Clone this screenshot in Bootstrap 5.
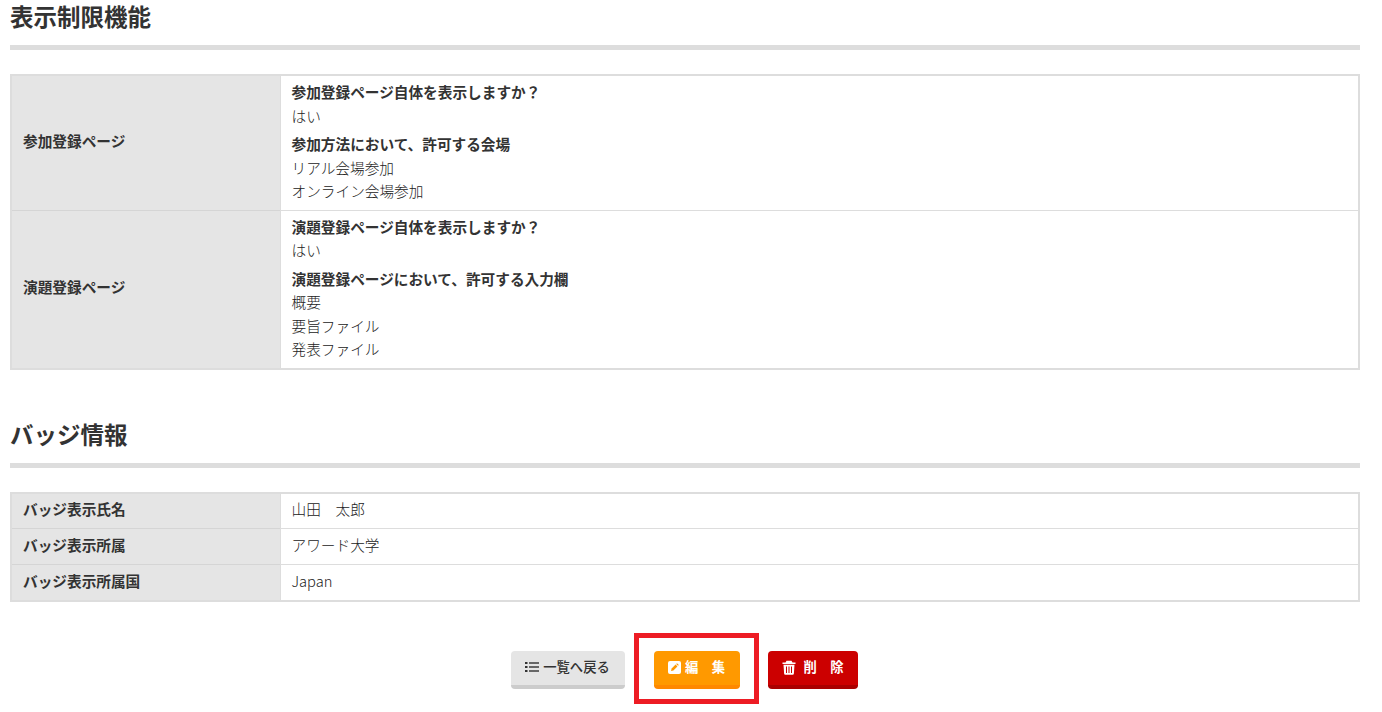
<!DOCTYPE html>
<html lang="ja">
<head>
<meta charset="utf-8">
<title>表示制限機能</title>
<link href="https://cdn.jsdelivr.net/npm/bootstrap@5.3.0/dist/css/bootstrap.min.css" rel="stylesheet">
<style>
body{font-family:"Noto Sans CJK JP","Noto Sans",sans-serif;color:#333;font-size:14.67px;line-height:23.5px;background:#fff}
.page-wrap{padding:0 22px 18px 10px}
.sec-title{font-size:23.5px;line-height:32px;font-weight:700;margin:0;padding-bottom:13px;border-bottom:5px solid #ddd;color:#333}
.sec-gap{margin-top:48px}
.info-table{width:100%;margin:24px 0 0;border-collapse:collapse;border:2px solid #ddd;table-layout:fixed}
.info-table th{width:269px;background:#e5e5e5;font-weight:700;padding:0 11px 4px;vertical-align:middle;border-top:1px solid #d5d5d5}
.info-table td{padding:4px 11px 7px;background:#fff;vertical-align:middle;border-top:1px solid #ddd;border-left:1px solid #ddd;font-weight:300;color:#222}
.info-table tr:first-child th,.info-table tr:first-child td{border-top:0}
.tight td{padding:0 11px 4px;height:36px}
.tight th{height:36px}
.qa-label{font-weight:700;color:#333}
.qa-block + .qa-block{margin-top:5px}
.action-row{margin-top:49px;gap:28px;padding-right:2px}
.act-btn{height:38px;border:0;border-radius:4px;font-size:13.33px;line-height:1;font-weight:700;display:inline-flex;align-items:center;justify-content:center;gap:4px;padding:0 0 1px}
.act-back{width:114px;background:#e5e5e5;border-bottom:4px solid #ccc;color:#333;font-weight:500}
.act-edit{width:86px;background:#f90;border-bottom:4px solid #f80;color:#fff}
.act-del{width:90px;background:#c00;border-bottom:4px solid #a00;color:#fff}
.edit-holder{position:relative;margin-left:1px}
.red-frame{position:absolute;left:-20px;top:-18px;width:125px;height:71px;border:5px solid #ed1c24;pointer-events:none}
</style>
</head>
<body>
<div class="page-wrap">
  <h2 class="sec-title">表示制限機能</h2>
  <table class="info-table">
    <tbody>
      <tr>
        <th>参加登録ページ</th>
        <td>
          <div class="qa-block"><div class="qa-label">参加登録ページ自体を表示しますか？</div><div>はい</div></div>
          <div class="qa-block"><div class="qa-label">参加方法において、許可する会場</div><div>リアル会場参加</div><div>オンライン会場参加</div></div>
        </td>
      </tr>
      <tr>
        <th>演題登録ページ</th>
        <td>
          <div class="qa-block"><div class="qa-label">演題登録ページ自体を表示しますか？</div><div>はい</div></div>
          <div class="qa-block"><div class="qa-label">演題登録ページにおいて、許可する入力欄</div><div>概要</div><div>要旨ファイル</div><div>発表ファイル</div></div>
        </td>
      </tr>
    </tbody>
  </table>

  <h2 class="sec-title sec-gap">バッジ情報</h2>
  <table class="info-table tight">
    <tbody>
      <tr><th>バッジ表示氏名</th><td>山田　太郎</td></tr>
      <tr><th>バッジ表示所属</th><td>アワード大学</td></tr>
      <tr><th>バッジ表示所属国</th><td>Japan</td></tr>
    </tbody>
  </table>

  <div class="d-flex justify-content-center action-row">
    <a class="act-btn act-back text-decoration-none" href="#">
      <svg width="14" height="12" viewBox="0 0 14 12" fill="#333"><rect x="0" y="1" width="2.500" height="2"/><rect x="0" y="5" width="2.500" height="2"/><rect x="0" y="9" width="2.500" height="2"/><rect x="4" y="1.300" width="10" height="1.400"/><rect x="4" y="5.300" width="10" height="1.400"/><rect x="4" y="9.300" width="10" height="1.400"/></svg>
      <span>一覧へ戻る</span>
    </a>
    <div class="edit-holder">
      <a class="act-btn act-edit text-decoration-none" href="#">
        <svg width="13" height="13" viewBox="0 0 13 13"><rect width="13" height="13" rx="2" fill="#fff"/><path d="M3 10l.6-2.400 4-4 1.800 1.800-4 4z" fill="#f90"/><path d="M8.200 3l.8-.8 1.800 1.800-.8.800z" fill="#f90"/></svg>
        <span>編　集</span>
      </a>
      <div class="red-frame"></div>
    </div>
    <a class="act-btn act-del text-decoration-none" href="#">
      <svg width="14" height="15" viewBox="0 0 14 15"><path d="M4.500.8h5l1 1.700H13.500v1.500H.5V2.500h3z" fill="#fff"/><path d="M1.500 4.800h11l-.6 8.700a1.300 1.300 0 0 1-1.300 1.200H3.400a1.300 1.300 0 0 1-1.300-1.200z" fill="#fff"/><path d="M4.500 6.500v6.500M7 6.500v6.500M9.500 6.500v6.500" stroke="#c00" stroke-width="1"/></svg>
      <span class="ms-1">削　除</span>
    </a>
  </div>
</div>
<script src="https://cdn.jsdelivr.net/npm/bootstrap@5.3.0/dist/js/bootstrap.bundle.min.js"></script>
</body>
</html>
